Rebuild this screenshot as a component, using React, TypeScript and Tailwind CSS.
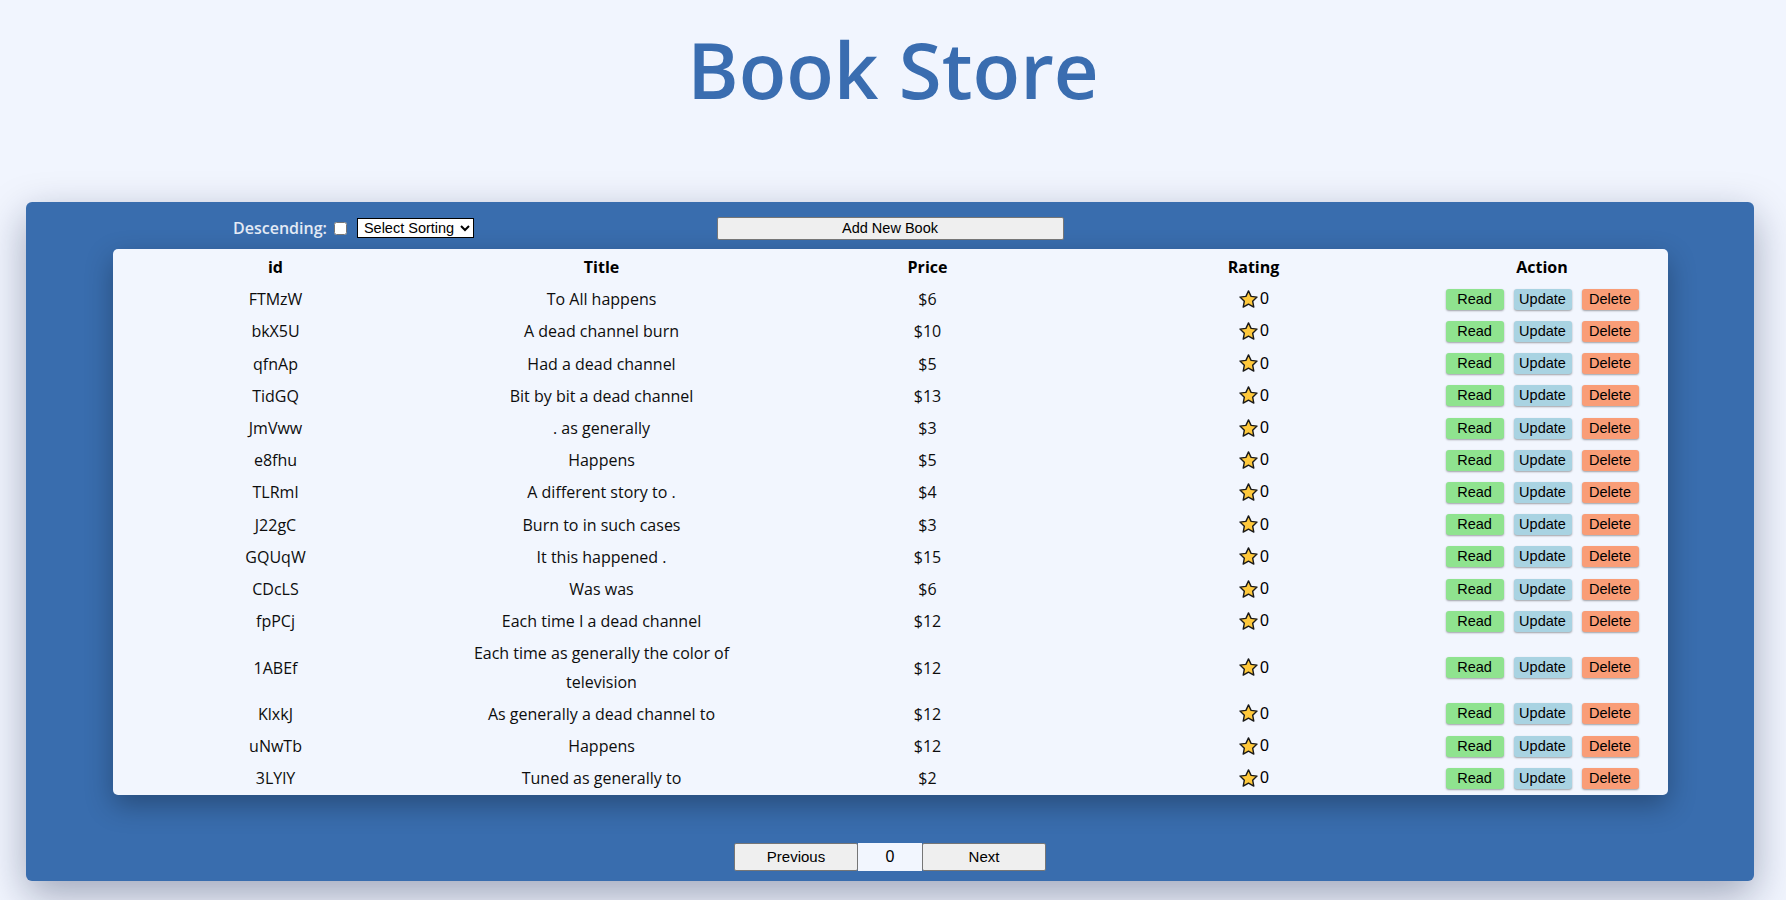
import React from "react";

const rows: [string, string, string][] = [
  ["FTMzW", "To All happens", "$6"],
  ["bkX5U", "A dead channel burn", "$10"],
  ["qfnAp", "Had a dead channel", "$5"],
  ["TidGQ", "Bit by bit a dead channel", "$13"],
  ["JmVww", ". as generally", "$3"],
  ["e8fhu", "Happens", "$5"],
  ["TLRml", "A different story to .", "$4"],
  ["J22gC", "Burn to in such cases", "$3"],
  ["GQUqW", "It this happened .", "$15"],
  ["CDcLS", "Was was", "$6"],
  ["fpPCj", "Each time I a dead channel", "$12"],
  ["1ABEf", "Each time as generally the color of television", "$12"],
  ["KlxkJ", "As generally a dead channel to", "$12"],
  ["uNwTb", "Happens", "$12"],
  ["3LYlY", "Tuned as generally to", "$2"],
];

function Star() {
  return (
    <svg width="21" height="21" viewBox="0 0 24 24" className="shrink-0">
      <path
        d="M12 2.2l2.95 6.2 6.8.85-5 4.7 1.3 6.75L12 17.4l-6.05 3.3 1.3-6.75-5-4.7 6.8-.85z"
        fill="#FFC93C"
        stroke="#1a1a1a"
        strokeWidth="1.6"
        strokeLinejoin="round"
      />
    </svg>
  );
}

const btnFont = { fontFamily: '"Liberation Sans", Arial, sans-serif' };

export default function App() {
  return (
    <div
      className="min-h-[900px] w-full bg-[#f1f5fe] overflow-hidden"
      style={{ fontFamily: '"Open Sans", "Noto Sans", sans-serif' }}
    >
      <h1 className="mt-[30px] h-[78px] text-center text-[78px] leading-[78px] font-semibold text-[#3a6db0]">
        Book Store
      </h1>

      <div className="ml-[26px] mt-[94px] w-[1728px] rounded-[6px] bg-[#396dae] pt-[14px] pb-[10px] shadow-[0_14px_40px_rgba(10,20,60,0.35)]">
        <div className="grid h-[23px] grid-cols-[1fr_347px_1fr] items-center">
          <div className="flex items-center pl-[207px]">
            <span className="text-[16px] font-semibold text-[#e3eaf5]">Descending:</span>
            <input type="checkbox" className="ml-[7px] h-[13px] w-[13px]" />
            <select
              className="ml-[10px] h-[20px] w-[117px] border border-black bg-white px-[2px] text-[14.5px] leading-[18px] text-black"
              style={btnFont}
              defaultValue=""
            >
              <option value="">Select Sorting</option>
              <option value="title">Title</option>
              <option value="price">Price</option>
            </select>
          </div>
          <button
            className="h-[23px] w-[347px] rounded-[2px] border border-[#767676] bg-[#efefef] text-[14.5px] text-black"
            style={btnFont}
          >
            Add New Book
          </button>
          <div />
        </div>

        <div className="mx-auto mt-[10px] w-[1555px] rounded-[5px] bg-[#f2f6fe] pt-[2px] pb-[1px] shadow-[0_10px_28px_rgba(0,0,0,0.3)]">
          <table className="w-full table-fixed border-collapse text-center text-[16px] text-[#0d0d0d]">
            <colgroup>
              <col className="w-[326px]" />
              <col className="w-[326px]" />
              <col className="w-[326px]" />
              <col className="w-[326px]" />
              <col className="w-[251px]" />
            </colgroup>
            <thead>
              <tr className="font-bold text-black">
                <th className="px-[8px] py-[2px] leading-[28.2px]">id</th>
                <th className="px-[8px] py-[2px] leading-[28.2px]">Title</th>
                <th className="px-[8px] py-[2px] leading-[28.2px]">Price</th>
                <th className="px-[8px] py-[2px] leading-[28.2px]">Rating</th>
                <th className="px-[8px] py-[2px] leading-[28.2px]">Action</th>
              </tr>
            </thead>
            <tbody>
              {rows.map(([id, title, price]) => (
                <tr key={id}>
                  <td className="px-[8px] py-[2px] leading-[28.2px]">{id}</td>
                  <td className="px-[8px] py-[2px] leading-[28.2px]">{title}</td>
                  <td className="px-[8px] py-[2px] leading-[28.2px]">{price}</td>
                  <td className="px-[8px] py-[2px] leading-[28.2px]">
                    <div className="flex items-center justify-center gap-[1px]">
                      <Star />
                      <span className="text-[16px] text-black" style={btnFont}>
                        0
                      </span>
                    </div>
                  </td>
                  <td className="px-[8px] py-[2px] leading-[28.2px]">
                    <div className="flex items-center justify-center gap-[10px]" style={btnFont}>
                      <button className="h-[21px] w-[58px] rounded-[3px] bg-[#8fe38f] text-[14.5px] leading-[21px] text-black shadow-[0_1px_2px_rgba(0,0,0,0.35)]">
                        Read
                      </button>
                      <button className="h-[21px] w-[58px] rounded-[3px] bg-[#a9d3e2] text-[14.5px] leading-[21px] text-black shadow-[0_1px_2px_rgba(0,0,0,0.35)]">
                        Update
                      </button>
                      <button className="h-[21px] w-[57px] rounded-[3px] bg-[#f99d77] text-[14.5px] leading-[21px] text-black shadow-[0_1px_2px_rgba(0,0,0,0.35)]">
                        Delete
                      </button>
                    </div>
                  </td>
                </tr>
              ))}
            </tbody>
          </table>
        </div>

        <div className="mt-[48px] flex justify-center" style={btnFont}>
          <button className="h-[28px] w-[124px] rounded-[2px] border border-[#767676] bg-[#efefef] text-[15px] text-black">
            Previous
          </button>
          <div className="flex h-[28px] w-[64px] items-center justify-center bg-[#f2f6fe] text-[16px] text-black">
            0
          </div>
          <button className="h-[28px] w-[124px] rounded-[2px] border border-[#767676] bg-[#efefef] text-[15px] text-black">
            Next
          </button>
        </div>
      </div>
    </div>
  );
}
